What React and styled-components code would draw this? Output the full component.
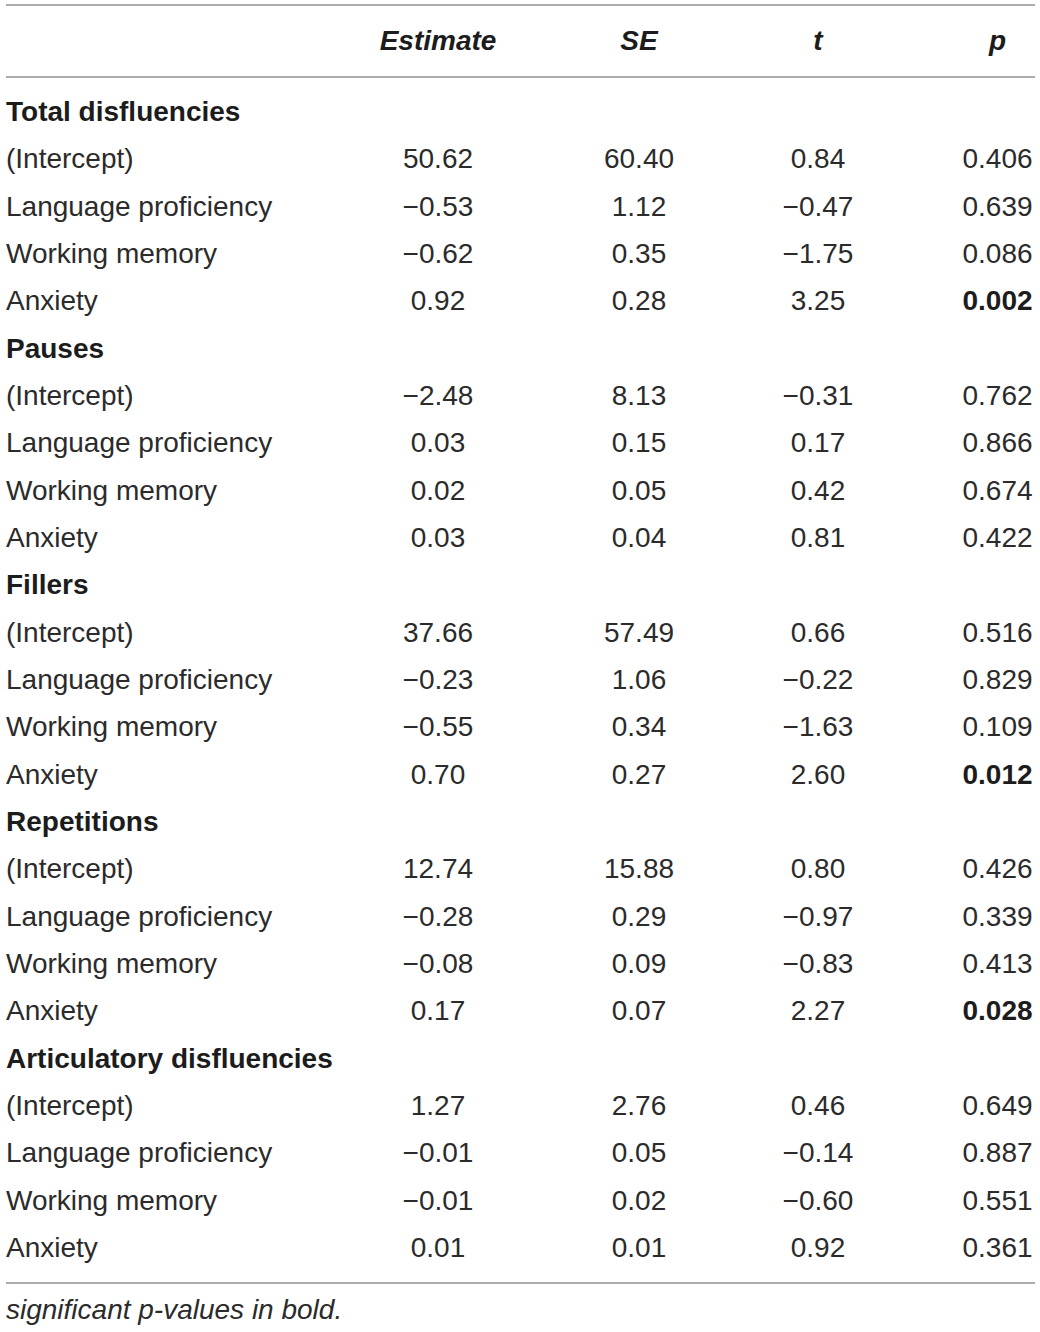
import React from 'react';
import styled, { createGlobalStyle } from 'styled-components';

const GlobalStyle = createGlobalStyle`
  body {
    margin: 0;
    background: #ffffff;
    font-family: "Liberation Sans", Arial, sans-serif;
    color: #2b2b2b;
  }
`;

const Wrapper = styled.div`
  width: 1029px;
  padding: 4px 0 0 6px;
`;

const Header = styled.div`
  display: grid;
  grid-template-columns: 268px 328px 74px 284px 75px;
  height: 70px;
  align-items: center;
  border-top: 2px solid #ababab;
  border-bottom: 2px solid #ababab;
`;

const HeadCell = styled.div`
  font-size: 28px;
  font-weight: bold;
  font-style: italic;
  color: #1c1c1c;
  text-align: center;
  white-space: nowrap;
`;

const Body = styled.div`
  padding: 10.33px 0 10px;
  border-bottom: 2px solid #ababab;
`;

const Row = styled.div`
  display: grid;
  grid-template-columns: 268px 328px 74px 284px 75px;
  height: 47.33px;
  align-items: center;
  font-size: 28px;
`;

const Label = styled.div`
  white-space: nowrap;
  font-weight: ${({ group }) => (group ? 'bold' : 'normal')};
  color: ${({ group }) => (group ? '#1c1c1c' : '#2b2b2b')};
`;

const Value = styled.div`
  text-align: center;
  white-space: nowrap;
  font-weight: ${({ strong }) => (strong ? 'bold' : 'normal')};
  color: ${({ strong }) => (strong ? '#1c1c1c' : '#2b2b2b')};
`;

const Note = styled.div`
  font-size: 28px;
  font-style: italic;
  line-height: 52px;
  color: #2b2b2b;
`;

const groups = [
  {
    title: 'Total disfluencies',
    rows: [
      ['(Intercept)', '50.62', '60.40', '0.84', '0.406'],
      ['Language proficiency', '\u22120.53', '1.12', '\u22120.47', '0.639'],
      ['Working memory', '\u22120.62', '0.35', '\u22121.75', '0.086'],
      ['Anxiety', '0.92', '0.28', '3.25', '0.002', true],
    ],
  },
  {
    title: 'Pauses',
    rows: [
      ['(Intercept)', '\u22122.48', '8.13', '\u22120.31', '0.762'],
      ['Language proficiency', '0.03', '0.15', '0.17', '0.866'],
      ['Working memory', '0.02', '0.05', '0.42', '0.674'],
      ['Anxiety', '0.03', '0.04', '0.81', '0.422'],
    ],
  },
  {
    title: 'Fillers',
    rows: [
      ['(Intercept)', '37.66', '57.49', '0.66', '0.516'],
      ['Language proficiency', '\u22120.23', '1.06', '\u22120.22', '0.829'],
      ['Working memory', '\u22120.55', '0.34', '\u22121.63', '0.109'],
      ['Anxiety', '0.70', '0.27', '2.60', '0.012', true],
    ],
  },
  {
    title: 'Repetitions',
    rows: [
      ['(Intercept)', '12.74', '15.88', '0.80', '0.426'],
      ['Language proficiency', '\u22120.28', '0.29', '\u22120.97', '0.339'],
      ['Working memory', '\u22120.08', '0.09', '\u22120.83', '0.413'],
      ['Anxiety', '0.17', '0.07', '2.27', '0.028', true],
    ],
  },
  {
    title: 'Articulatory disfluencies',
    rows: [
      ['(Intercept)', '1.27', '2.76', '0.46', '0.649'],
      ['Language proficiency', '\u22120.01', '0.05', '\u22120.14', '0.887'],
      ['Working memory', '\u22120.01', '0.02', '\u22120.60', '0.551'],
      ['Anxiety', '0.01', '0.01', '0.92', '0.361'],
    ],
  },
];

export default function App() {
  return (
    <Wrapper>
      <GlobalStyle />
      <Header>
        <HeadCell />
        <HeadCell>Estimate</HeadCell>
        <HeadCell>SE</HeadCell>
        <HeadCell>t</HeadCell>
        <HeadCell>p</HeadCell>
      </Header>
      <Body>
        {groups.map((g) => (
          <React.Fragment key={g.title}>
            <Row>
              <Label group>{g.title}</Label>
            </Row>
            {g.rows.map(([label, est, se, t, p, sig]) => (
              <Row key={g.title + label}>
                <Label>{label}</Label>
                <Value>{est}</Value>
                <Value>{se}</Value>
                <Value>{t}</Value>
                <Value strong={sig}>{p}</Value>
              </Row>
            ))}
          </React.Fragment>
        ))}
      </Body>
      <Note>significant p-values in bold.</Note>
    </Wrapper>
  );
}
